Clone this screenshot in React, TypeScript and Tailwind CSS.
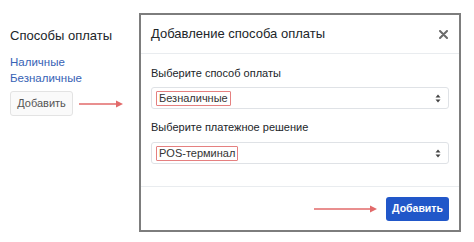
function Arrow({ width }: { width: number }) {
  return (
    <svg width={width} height="8" viewBox={`0 0 ${width} 8`} className="shrink-0">
      <line x1="0" y1="4" x2={width - 6} y2="4" stroke="#e26a6a" strokeWidth="1.5" />
      <polygon points={`${width - 7},0.5 ${width},4 ${width - 7},7.5`} fill="#e26a6a" />
    </svg>
  );
}

function SelectBox({ value }: { value: string }) {
  return (
    <div className="flex h-[22px] items-center justify-between rounded-[3px] border border-[#dfe2e6] bg-white pl-[4px] pr-[7px]">
      <span className="rounded-[1px] border border-[#e58080] px-[2px] text-[11px] leading-[13px] text-[#333]">{value}</span>
      <svg width="6" height="9" viewBox="0 0 6 9">
        <polygon points="3,0.5 5.5,3.5 0.5,3.5" fill="#444" />
        <polygon points="3,8.5 5.5,5.5 0.5,5.5" fill="#444" />
      </svg>
    </div>
  );
}

export default function App() {
  return (
    <div
      className="flex h-[242px] w-[474px] bg-white text-[#212529]"
      style={{ fontFamily: '"Liberation Sans", Arial, sans-serif' }}
    >
      {/* страница */}
      <div className="w-[139px] shrink-0 pl-[10px] pt-[27px]">
        <h2 className="text-[13px] leading-[18px]">Способы оплаты</h2>
        <div className="mt-[11px] flex flex-col gap-[3px] text-[11.5px] leading-[13px] text-[#3762b5]">
          <a>Наличные</a>
          <a>Безналичные</a>
        </div>
        <div className="mt-[6px] flex items-center gap-[6px]">
          <button className="h-[25px] w-[63px] rounded-[3px] border border-[#e3e3e3] bg-[#fafafa] text-[11px] text-[#555]">
            Добавить
          </button>
          <Arrow width={44} />
        </div>
      </div>

      {/* модалка */}
      <div className="mt-[13px] flex h-[219px] w-[322px] flex-col border-2 border-[#7d7d7d] bg-white">
        <div className="flex h-[39px] shrink-0 items-center justify-between border-b border-[#e9ecef] pl-[10px] pr-[11px]">
          <span className="text-[13px]">Добавление способа оплаты</span>
          <svg width="9" height="9" viewBox="0 0 9 9">
            <path d="M1 1 L8 8 M8 1 L1 8" stroke="#6b6b6b" strokeWidth="2" strokeLinecap="round" />
          </svg>
        </div>
        <div className="flex flex-col border-b border-[#e9ecef] px-[10px] pt-[12px] pb-[22px]">
          <label className="text-[11px] leading-[14px]">Выберите способ оплаты</label>
          <div className="mt-[7px]">
            <SelectBox value="Безналичные" />
          </div>
          <label className="mt-[11px] text-[11px] leading-[14px]">Выберите платежное решение</label>
          <div className="mt-[8px]">
            <SelectBox value="POS-терминал" />
          </div>
        </div>
        <div className="flex flex-1 items-center justify-end gap-[9px] pr-[10px]">
          <Arrow width={63} />
          <button className="h-[24px] w-[63px] rounded-[3px] bg-[#2157c9] text-[10.5px] font-bold text-white">
            Добавить
          </button>
        </div>
      </div>
    </div>
  );
}
